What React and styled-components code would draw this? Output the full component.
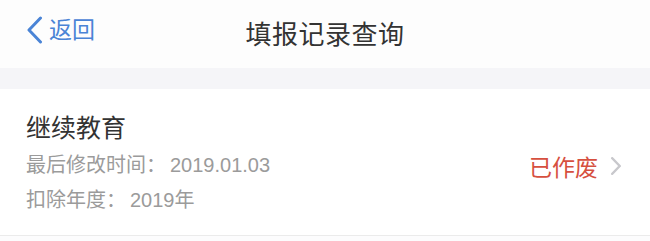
import React from "react";
import styled, { createGlobalStyle } from "styled-components";

const GlobalStyle = createGlobalStyle`
  html, body {
    margin: 0;
    padding: 0;
    background: #fcfcfd;
    font-family: "Liberation Sans", "Noto Sans CJK SC", sans-serif;
  }
`;

const Page = styled.div`
  width: 650px;
  min-height: 241px;
  background: #fcfcfd;
`;

const NavBar = styled.div`
  position: relative;
  height: 68px;
  display: flex;
  align-items: center;
  justify-content: center;
  background: #fdfdfd;
`;

const BackButton = styled.div`
  position: absolute;
  left: 26px;
  top: 16px;
  display: flex;
  align-items: center;
  gap: 6px;
  color: #4a84d6;
  font-size: 23px;
  line-height: 28px;
`;

const Title = styled.h1`
  margin: 0;
  font-size: 26px;
  font-weight: normal;
  color: #333;
  letter-spacing: 0.5px;
  margin-top: -4px;
`;

const Spacer = styled.div`
  height: 21px;
  background: #f5f5f8;
`;

const RecordCard = styled.div`
  display: flex;
  align-items: center;
  justify-content: space-between;
  padding: 22px 28px 17px 26px;
  background: #fff;
  border-bottom: 1px solid #ebebeb;
`;

const Info = styled.div`
  display: flex;
  flex-direction: column;
`;

const RecordName = styled.div`
  font-size: 25px;
  line-height: 34px;
  color: #333;
  margin-bottom: 3px;
`;

const Meta = styled.div`
  font-size: 20px;
  line-height: 35px;
  color: #9b9b9b;
`;

const Colon = styled.span`
  margin-right: 4px;
`;

const Status = styled.div`
  display: flex;
  align-items: center;
  gap: 12px;
  margin-top: 3px;
  color: ${(p) => (p.$void ? "#d6503f" : "#333")};
  font-size: 23px;
`;

const Chevron = ({ color, w, h, sw }) => (
  <svg width={w} height={h} viewBox={`0 0 ${w} ${h}`} fill="none">
    <path
      d={`M${sw / 2 + 1} ${sw / 2} L${w - sw / 2 - 1} ${h / 2} L${sw / 2 + 1} ${h - sw / 2}`}
      stroke={color}
      strokeWidth={sw}
      strokeLinecap="round"
      strokeLinejoin="round"
    />
  </svg>
);

const BackChevron = () => (
  <svg width="17" height="28" viewBox="0 0 17 28" fill="none">
    <path
      d="M14.5 2 L3 14 L14.5 26"
      stroke="#4a84d6"
      strokeWidth="3"
      strokeLinecap="round"
      strokeLinejoin="round"
    />
  </svg>
);

const records = [
  {
    name: "继续教育",
    modified: "2019.01.03",
    year: "2019年",
    status: "已作废",
  },
];

export default function App() {
  return (
    <Page>
      <GlobalStyle />
      <NavBar>
        <BackButton>
          <BackChevron />
          <span>返回</span>
        </BackButton>
        <Title>填报记录查询</Title>
      </NavBar>
      <Spacer />
      {records.map((r) => (
        <RecordCard key={r.name}>
          <Info>
            <RecordName>{r.name}</RecordName>
            <Meta>
              最后修改时间<Colon>：</Colon>
              {r.modified}
            </Meta>
            <Meta>
              扣除年度<Colon>：</Colon>
              {r.year}
            </Meta>
          </Info>
          <Status $void>
            <span>{r.status}</span>
            <Chevron color="#c8c8cc" w={12} h={18} sw={2.5} />
          </Status>
        </RecordCard>
      ))}
    </Page>
  );
}
